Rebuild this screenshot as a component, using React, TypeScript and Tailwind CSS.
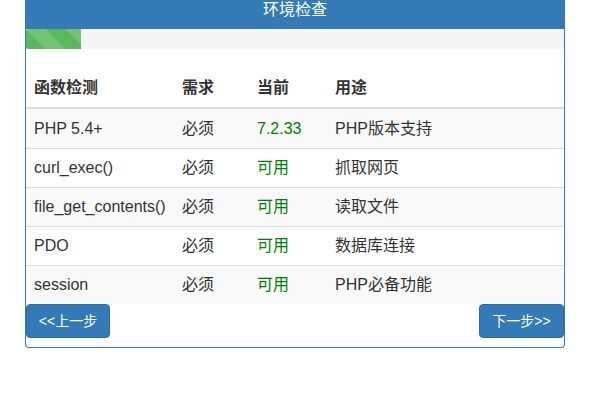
export default function App() {
  const rows = [
    ["PHP 5.4+", "必须", "7.2.33", "PHP版本支持"],
    ["curl_exec()", "必须", "可用", "抓取网页"],
    ["file_get_contents()", "必须", "可用", "读取文件"],
    ["PDO", "必须", "可用", "数据库连接"],
    ["session", "必须", "可用", "PHP必备功能"],
  ];
  return (
    <div className="w-[616px] h-[400px] bg-white text-[#333] text-[16px]" style={{ fontFamily: '"Liberation Sans", "Noto Sans CJK SC", sans-serif' }}>
      <div className="ml-[25px] w-[540px] h-[348px] border border-[#337ab7] border-t-0 rounded-b-[4px] flex flex-col">
        <div className="h-[29px] bg-[#337ab7] text-white text-center leading-[20px] -mx-px">环境检查</div>
        <div className="h-[20px] bg-[#f5f5f5] flex">
          <div className="w-[55px] h-full bg-[#5cb85c] rounded-l-[2px]" style={{ backgroundImage: "linear-gradient(45deg, rgba(255,255,255,.15) 25%, transparent 25%, transparent 50%, rgba(255,255,255,.15) 50%, rgba(255,255,255,.15) 75%, transparent 75%, transparent)", backgroundSize: "40px 40px" }} />
        </div>
        <div className="h-[20px]" />
        <div className="flex h-[40px] items-center font-bold border-b-2 border-[#ddd]">
          <div className="w-[148px] pl-[8px]">函数检测</div>
          <div className="w-[75px] pl-[8px]">需求</div>
          <div className="w-[78px] pl-[8px]">当前</div>
          <div className="flex-1 pl-[8px]">用途</div>
        </div>
        {rows.map((r, i) => (
          <div key={i} className={`flex h-[39px] items-center ${i > 0 ? "border-t border-[#ddd]" : ""} ${i % 2 === 0 ? "bg-[#f9f9f9]" : ""}`}>
            <div className="w-[148px] pl-[8px]">{r[0]}</div>
            <div className="w-[75px] pl-[8px]">{r[1]}</div>
            <div className="w-[78px] pl-[8px] text-[#008000]">{r[2]}</div>
            <div className="flex-1 pl-[8px]">{r[3]}</div>
          </div>
        ))}
        <div className="flex justify-between">
          <button className="w-[84px] h-[34px] bg-[#337ab7] text-white text-[14px] rounded-[4px] border border-[#2e6da4]">&lt;&lt;上一步</button>
          <button className="w-[85px] h-[34px] bg-[#337ab7] text-white text-[14px] rounded-[4px] border border-[#2e6da4]">下一步&gt;&gt;</button>
        </div>
      </div>
    </div>
  );
}
